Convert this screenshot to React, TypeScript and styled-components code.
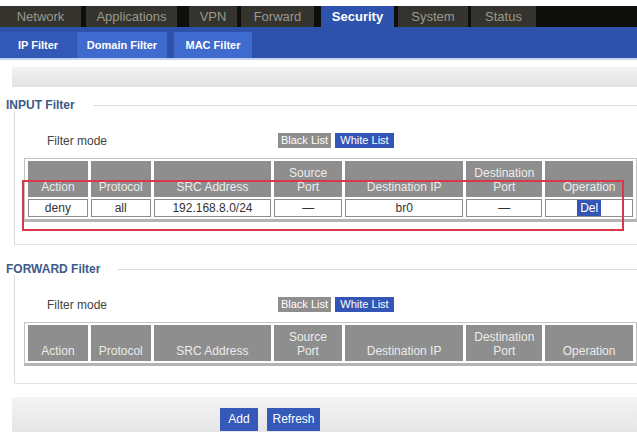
import React from 'react';
import styled, { createGlobalStyle } from 'styled-components';

const GlobalStyle = createGlobalStyle`
  html, body {
    margin: 0;
    padding: 0;
    background: #fff;
  }
  body {
    font-family: "Liberation Sans", Arial, sans-serif;
    font-size: 12px;
    color: #333;
  }
`;

const Page = styled.div`
  width: 637px;
  height: 432px;
  overflow: hidden;
  padding-top: 6px;
  box-sizing: border-box;
`;

const NavBar = styled.div`
  display: flex;
  height: 21px;
  background: #0e0e0c;
`;

const NavTab = styled.div<{ $w: number; $gap: number; $active?: boolean }>`
  width: ${(p) => p.$w}px;
  margin-left: ${(p) => p.$gap}px;
  background: ${(p) => (p.$active ? '#2d53ad' : '#34332d')};
  color: ${(p) => (p.$active ? '#fff' : '#9a998f')};
  font-weight: ${(p) => (p.$active ? 'bold' : 'normal')};
  font-size: 13px;
  display: flex;
  align-items: center;
  justify-content: center;
`;

const SubBar = styled.div`
  display: flex;
  align-items: flex-end;
  height: 31px;
  background: #2c52ab;
`;

const SubTab = styled.div<{ $w: number; $gap: number; $active?: boolean }>`
  width: ${(p) => p.$w}px;
  margin-left: ${(p) => p.$gap}px;
  height: 26px;
  background: ${(p) => (p.$active ? '#3259b7' : '#3f6bcf')};
  color: #fff;
  font-size: 11px;
  font-weight: bold;
  display: flex;
  align-items: center;
  justify-content: center;
`;

const SubLine = styled.div`
  height: 2px;
  background: #c5d3ef;
`;

const Toolbar = styled.div`
  margin: 7px 0 0 12px;
  height: 20px;
  background: linear-gradient(#f3f3f3, #e2e2e2);
`;

const SectionHead = styled.div<{ $top: number }>`
  display: flex;
  align-items: center;
  height: 12px;
  margin-top: ${(p) => p.$top}px;
`;

const SectionTitle = styled.div`
  padding-left: 6px;
  font-weight: bold;
  font-size: 12px;
  color: #3d5a8a;
`;

const SectionRule = styled.div`
  flex: 1;
  height: 1px;
  margin-left: 18px;
  background: #dcdcdc;
`;

const SectionBody = styled.div<{ $bottom: number }>`
  position: relative;
  margin-left: 14px;
  padding: 22px 0 ${(p) => p.$bottom}px;
  border-left: 1px solid #dadada;
  border-bottom: 1px solid #e2e2e2;
`;

const ModeRow = styled.div`
  display: flex;
  align-items: center;
  height: 15px;
`;

const ModeLabel = styled.div`
  width: 231px;
  padding-left: 32px;
  font-size: 12px;
  color: #444;
`;

const ModeButton = styled.div<{ $on?: boolean; $w: number }>`
  width: ${(p) => p.$w}px;
  height: 15px;
  margin-right: 4px;
  background: ${(p) => (p.$on ? '#3355b5' : '#8e8e8e')};
  color: #fff;
  font-size: 11px;
  line-height: 15px;
  text-align: center;
`;

const Table = styled.table`
  margin: 10px 0 0 9px;
  border-collapse: separate;
  border-spacing: 3px 2px;
  background: #fff;
  border: 1px solid #c4c4c4;
  border-bottom: 3px solid #b4b4b4;
  table-layout: fixed;
`;

const Th = styled.th`
  height: 36px;
  padding: 0 2px 3px;
  box-sizing: border-box;
  background: #8e8e8e;
  color: #ececec;
  font-weight: normal;
  font-size: 12px;
  line-height: 14px;
  vertical-align: bottom;
  text-align: center;
`;

const Td = styled.td`
  height: 18px;
  padding: 0;
  box-sizing: border-box;
  border: 1px solid #8c8c8c;
  background: #fff;
  font-size: 12px;
  color: #333;
  text-align: center;
`;

const DelButton = styled.span`
  display: inline-block;
  padding: 1px 3px;
  background: #3356b6;
  color: #fff;
  font-size: 12px;
`;

const Highlight = styled.div`
  position: absolute;
  left: 7px;
  top: 69px;
  width: 602px;
  height: 51px;
  box-sizing: border-box;
  border: 2px solid #d9384a;
`;

const BottomBar = styled.div`
  display: flex;
  gap: 9px;
  margin: 13px 0 0 12px;
  height: 40px;
  padding: 11px 0 0 208px;
  box-sizing: border-box;
  background: linear-gradient(#f4f4f4, #e3e3e3);
`;

const ActionButton = styled.div<{ $w: number }>`
  width: ${(p) => p.$w}px;
  height: 23px;
  background: #3459b9;
  color: #fff;
  font-size: 12px;
  line-height: 23px;
  text-align: center;
`;

const navTabs = [
  { label: 'Network', w: 81, gap: 0 },
  { label: 'Applications', w: 91, gap: 5 },
  { label: 'VPN', w: 48, gap: 12 },
  { label: 'Forward', w: 73, gap: 4 },
  { label: 'Security', w: 73, gap: 7, active: true },
  { label: 'System', w: 70, gap: 4 },
  { label: 'Status', w: 65, gap: 3 },
];

const subTabs = [
  { label: 'IP Filter', w: 76, gap: 0, active: true },
  { label: 'Domain Filter', w: 90, gap: 1 },
  { label: 'MAC Filter', w: 78, gap: 7 },
];

const colWidths = [60, 60, 118, 68, 119, 76, 88];

const headers: React.ReactNode[] = [
  'Action',
  'Protocol',
  'SRC Address',
  <>Source<br />Port</>,
  'Destination IP',
  <>Destination<br />Port</>,
  'Operation',
];

interface Rule {
  action: string;
  protocol: string;
  src: string;
  srcPort: string;
  dstIp: string;
  dstPort: string;
}

const inputRules: Rule[] = [
  { action: 'deny', protocol: 'all', src: '192.168.8.0/24', srcPort: '—', dstIp: 'br0', dstPort: '—' },
];

const FilterTable: React.FC<{ rules: Rule[] }> = ({ rules }) => (
  <Table>
    <colgroup>
      {colWidths.map((w, i) => (
        <col key={i} style={{ width: w }} />
      ))}
    </colgroup>
    <thead>
      <tr>
        {headers.map((h, i) => (
          <Th key={i}>{h}</Th>
        ))}
      </tr>
    </thead>
    <tbody>
      {rules.map((r, i) => (
        <tr key={i}>
          <Td>{r.action}</Td>
          <Td>{r.protocol}</Td>
          <Td>{r.src}</Td>
          <Td>{r.srcPort}</Td>
          <Td>{r.dstIp}</Td>
          <Td>{r.dstPort}</Td>
          <Td>
            <DelButton>Del</DelButton>
          </Td>
        </tr>
      ))}
    </tbody>
  </Table>
);

const FilterMode: React.FC = () => (
  <ModeRow>
    <ModeLabel>Filter mode</ModeLabel>
    <ModeButton $w={53}>Black List</ModeButton>
    <ModeButton $w={59} $on>
      White List
    </ModeButton>
  </ModeRow>
);

const App: React.FC = () => (
  <Page>
    <GlobalStyle />
    <NavBar>
      {navTabs.map((t) => (
        <NavTab key={t.label} $w={t.w} $gap={t.gap} $active={t.active}>
          {t.label}
        </NavTab>
      ))}
    </NavBar>
    <SubBar>
      {subTabs.map((t) => (
        <SubTab key={t.label} $w={t.w} $gap={t.gap} $active={t.active}>
          {t.label}
        </SubTab>
      ))}
    </SubBar>
    <SubLine />
    <Toolbar />

    <SectionHead $top={12}>
      <SectionTitle>INPUT Filter</SectionTitle>
      <SectionRule />
    </SectionHead>
    <SectionBody $bottom={22}>
      <FilterMode />
      <FilterTable rules={inputRules} />
      <Highlight />
    </SectionBody>

    <SectionHead $top={18}>
      <SectionTitle>FORWARD Filter</SectionTitle>
      <SectionRule />
    </SectionHead>
    <SectionBody $bottom={17}>
      <FilterMode />
      <FilterTable rules={[]} />
    </SectionBody>

    <BottomBar>
      <ActionButton $w={38}>Add</ActionButton>
      <ActionButton $w={53}>Refresh</ActionButton>
    </BottomBar>
  </Page>
);

export default App;
